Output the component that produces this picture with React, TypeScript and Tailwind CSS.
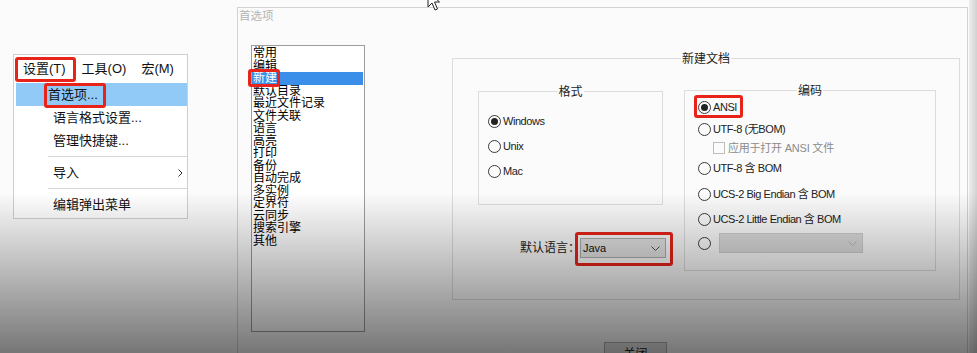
import { ReactNode } from 'react';

const cjk = "font-['Liberation_Sans','Noto_Sans_CJK_SC',sans-serif]";

const pages = [
  '常用', '编辑', '新建', '默认目录', '最近文件记录', '文件关联', '语言', '高亮',
  '打印', '备份', '自动完成', '多实例', '定界符', '云同步', '搜索引擎', '其他',
];

function RedBox({ className }: { className: string }) {
  return <span className={`pointer-events-none absolute rounded-[3px] border-[3px] border-[#e8231a] ${className}`} />;
}

function Radio({ checked }: { checked?: boolean }) {
  return (
    <span className="flex h-[13px] w-[13px] shrink-0 items-center justify-center rounded-full border border-[#3a3a3a]">
      {checked && <span className="h-[7px] w-[7px] rounded-full bg-[#222]" />}
    </span>
  );
}

function Chevron({ color }: { color: string }) {
  return (
    <svg width="9" height="5" viewBox="0 0 9 5" fill="none">
      <path d="M0.5 0.5 L4.5 4.5 L8.5 0.5" stroke={color} strokeWidth="1" />
    </svg>
  );
}

function GroupBox({ title, className, children }: { title: string; className: string; children?: ReactNode }) {
  return (
    <div className={`relative border border-[#dcdcdc] ${className}`}>
      <span className="absolute left-1/2 top-0 -translate-x-1/2 -translate-y-1/2 bg-[#fafbfa] px-px text-[12px] leading-[14px] text-[#222]">
        {title}
      </span>
      {children}
    </div>
  );
}

function Option({ label, checked, className }: { label: string; checked?: boolean; className: string }) {
  return (
    <div className={`flex items-center gap-[2px] ${className}`}>
      <Radio checked={checked} />
      <span className="text-[11px] tracking-[-0.04em] text-[#222]">{label}</span>
    </div>
  );
}

function Menu() {
  return (
    <div className={`absolute left-[13px] top-[54px] h-[165px] w-[175px] border border-[#cfcfcf] bg-white text-[13px] text-[#111] ${cjk}`}>
      <div className="flex h-[28px] items-center">
        <div className="relative flex h-full items-center pl-[9px] pr-[8px]">
          设置(T)
          <RedBox className="bottom-[1px] left-px top-[2px] -right-[2px]" />
        </div>
        <div className="px-[8px]">工具(O)</div>
        <div className="px-[7px]">宏(M)</div>
      </div>
      <div className="ml-[2px]">
        <div className="relative flex h-[23px] items-center bg-[#91c9f7] pl-[32px]">
          首选项...
          <RedBox className="left-[28px] top-0 h-[25px] w-[62px]" />
        </div>
        <div className="flex h-[23px] items-center pl-[37px]">语言格式设置...</div>
        <div className="flex h-[23px] items-center pl-[37px]">管理快捷键...</div>
        <div className="flex h-[9px] items-center pl-[32px]">
          <div className="h-px w-full bg-[#d7d7d7]" />
        </div>
        <div className="flex h-[23px] items-center justify-between pl-[37px] pr-[4px]">
          导入
          <svg width="5" height="8" viewBox="0 0 5 8" fill="none">
            <path d="M0.5 0.5 L4 4 L0.5 7.5" stroke="#333" strokeWidth="1" />
          </svg>
        </div>
        <div className="flex h-[9px] items-center pl-[32px]">
          <div className="h-px w-full bg-[#d7d7d7]" />
        </div>
        <div className="flex h-[23px] items-center pl-[37px]">编辑弹出菜单</div>
      </div>
    </div>
  );
}

function Dialog() {
  return (
    <div className={`absolute left-[237px] top-[7px] h-[380px] w-[731px] border border-[#d2d2d2] ${cjk}`}>
      <div className="h-[17px] pl-[1px] text-[11.5px] leading-[17px] text-[#b4b4b4]">首选项</div>
      <div className="flex items-start pl-[13px] pt-[20px]">
        <div className="h-[287px] w-[114px] shrink-0 border border-[#9d9d9d] bg-white pt-px text-[12px] leading-[12.5px] text-black">
          {pages.map((p) =>
            p === '新建' ? (
              <div key={p} className="relative mr-px bg-[#3b8fe8] pl-px text-white">
                {p}
                <RedBox className="-left-[4px] -top-[3px] h-[18px] w-[32px]" />
              </div>
            ) : (
              <div key={p} className="pl-px">{p}</div>
            )
          )}
        </div>
        <GroupBox title="新建文档" className="ml-[87px] mt-[13px] h-[242px] w-[508px] shrink-0">
          <div className="flex items-start gap-[21px] pl-[25px] pt-[31px]">
            <div className="w-[185px] shrink-0">
              <GroupBox title="格式" className="mt-px h-[114px]">
                <div className="pl-[9px] pt-[17px]">
                  <Option label="Windows" checked className="h-[25px]" />
                  <Option label="Unix" className="h-[25px]" />
                  <Option label="Mac" className="h-[25px]" />
                </div>
              </GroupBox>
              <div className="-mr-[3px] mt-[33px] flex h-[20px] items-center justify-end">
                <span className="text-[12px] text-[#222]">默认语言：</span>
                <div className="relative flex h-[20px] w-[86px] items-center justify-between border border-[#acacac] bg-[#e3e3e3] pl-[2px] pr-[5px]">
                  <span className="text-[11px] text-[#111]">Java</span>
                  <Chevron color="#555" />
                  <RedBox className="-left-[6px] -top-[7px] h-[34px] w-[98px]" />
                </div>
              </div>
            </div>
            <GroupBox title="编码" className="h-[181px] w-[252px] shrink-0">
              <div className="pl-[13px] pt-[5px]">
                <div className="relative">
                  <Option label="ANSI" checked className="h-[22px]" />
                  <RedBox className="-left-[4px] -top-px h-[23px] w-[49px]" />
                </div>
                <Option label="UTF-8 (无BOM)" className="h-[22px]" />
                <div className="flex h-[16px] items-center gap-[3px] pl-[15px]">
                  <span className="h-[12px] w-[12px] border border-[#bdbdbd]" />
                  <span className="text-[11px] tracking-[-0.02em] text-[#8a8a8a]">应用于打开 ANSI 文件</span>
                </div>
                <Option label="UTF-8 含 BOM" className="h-[24px]" />
                <Option label="UCS-2 Big Endian 含 BOM" className="h-[28px]" />
                <Option label="UCS-2 Little Endian 含 BOM" className="h-[22px]" />
                <div className="flex h-[26px] items-center gap-[8px]">
                  <Radio />
                  <div className="flex h-[20px] w-[144px] items-center justify-end border border-[#cdcdcd] bg-[#dcdcdc] pr-[5px]">
                    <Chevron color="#b5b5b5" />
                  </div>
                </div>
              </div>
            </GroupBox>
          </div>
        </GroupBox>
      </div>
      <div className="pl-[366px] pt-[10px]">
        <div className="flex h-[24px] w-[63px] items-center justify-center border border-[#adadad] bg-[#e1e1e1] text-[12px] text-[#222]">
          关闭
        </div>
      </div>
    </div>
  );
}

export default function App() {
  return (
    <div className="relative h-[353px] w-full overflow-hidden bg-[#fafbfa]">
      <Dialog />
      <Menu />
      {/* window edge on the right */}
      <div className="absolute bottom-0 left-[969px] top-0 w-[8px] bg-linear-to-r from-[#ededed] to-[#d2d2d2]" />
      {/* mouse pointer, mostly off the top */}
      <svg className="absolute left-[427px] top-[-10px]" width="14" height="22" viewBox="0 0 14 22">
        <path d="M1 1 L1 17 L5 13 L8 20 L10.5 19 L7.5 12 L12.5 12 Z" fill="white" stroke="#222" strokeWidth="1" />
      </svg>
      {/* video shade over the lower half */}
      <div className="pointer-events-none absolute inset-0 bg-[linear-gradient(to_bottom,transparent_192px,rgba(0,0,0,0.53)_353px)]" />
    </div>
  );
}
